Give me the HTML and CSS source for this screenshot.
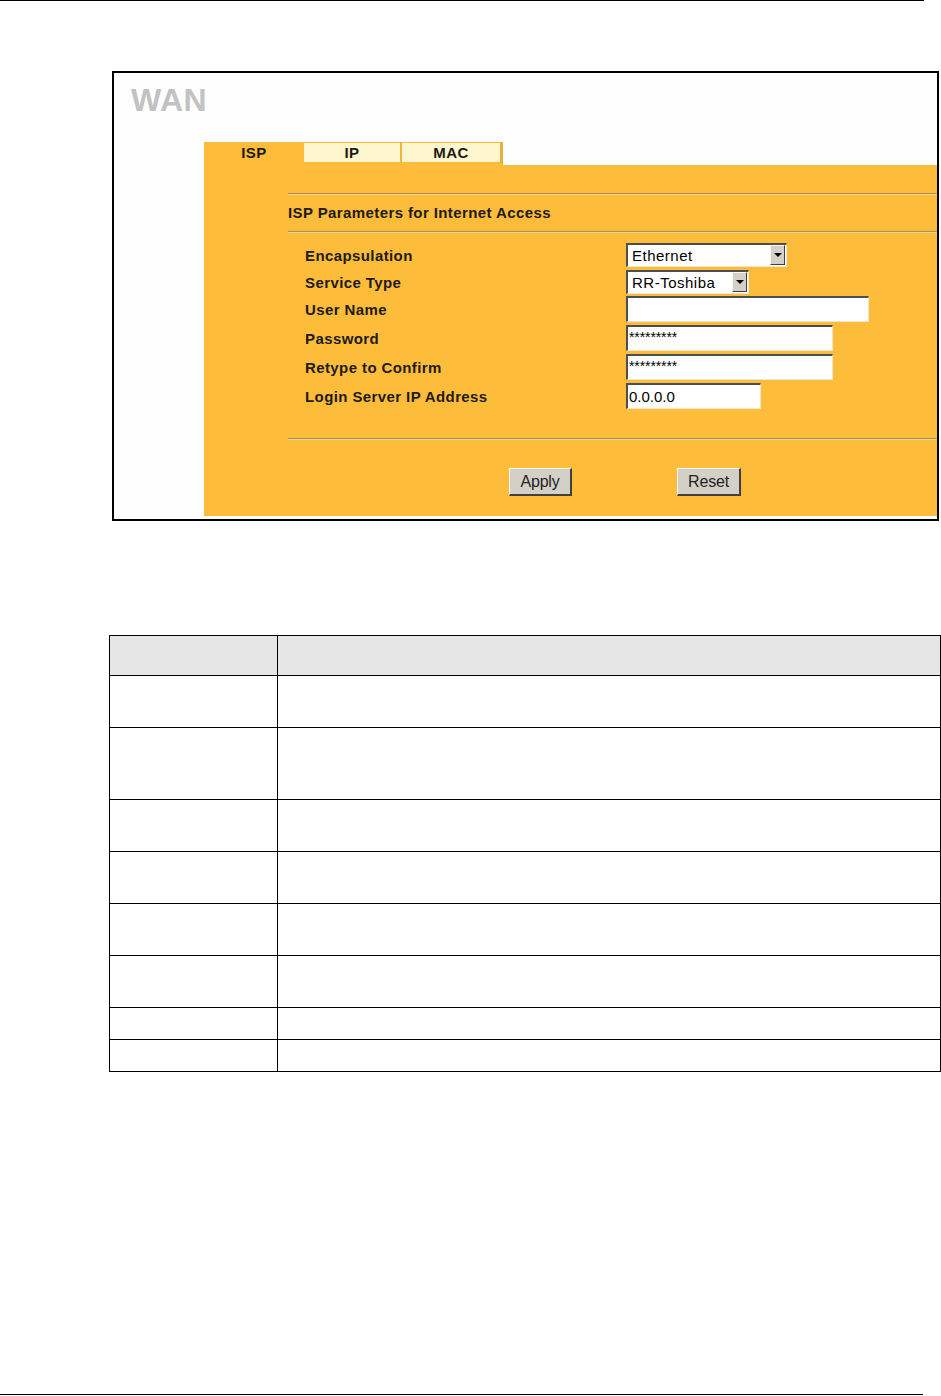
FILE: index.html
```html
<!DOCTYPE html>
<html lang="en">
<head>
    <meta charset="UTF-8">
    <meta name="viewport" content="width=device-width, initial-scale=1.0">
    <title>WAN - ISP</title>
    <link rel="stylesheet" href="styles.css">
</head>
<body>
<div class="page">

    <div class="rule-top"></div>

    <!-- screen capture of the WAN / ISP page -->
    <div class="shot">
        <div class="shot-title">WAN</div>

        <div class="panel">
            <div class="tabs">
                <div class="tab active">ISP</div>
                <div class="tab tab-ip">IP</div>
                <div class="tab tab-mac">MAC</div>
            </div>

            <div class="panel-body">
                <div class="groove"></div>
                <div class="heading">ISP Parameters for Internet Access</div>
                <div class="groove"></div>

                <div class="fields">
                    <div class="field">
                        <div class="label">Encapsulation</div>
                        <div class="select select-wide">
                            <span class="select-value">Ethernet</span>
                            <span class="select-arrow"></span>
                        </div>
                    </div>
                    <div class="field field-tight">
                        <div class="label">Service Type</div>
                        <div class="select select-narrow">
                            <span class="select-value">RR-Toshiba</span>
                            <span class="select-arrow"></span>
                        </div>
                    </div>
                    <div class="field">
                        <div class="label">User Name</div>
                        <div class="input input-user"></div>
                    </div>
                    <div class="field">
                        <div class="label">Password</div>
                        <div class="input input-pass"><span class="stars">*********</span></div>
                    </div>
                    <div class="field">
                        <div class="label">Retype to Confirm</div>
                        <div class="input input-pass"><span class="stars">*********</span></div>
                    </div>
                    <div class="field">
                        <div class="label">Login Server IP Address</div>
                        <div class="input input-ip"><span class="value">0.0.0.0</span></div>
                    </div>
                </div>

                <div class="groove"></div>

                <div class="actions">
                    <button class="btn btn-apply">Apply</button>
                    <button class="btn btn-reset">Reset</button>
                </div>
            </div>
        </div>
    </div>

    <table class="desc">
        <tr class="desc-head"><th></th><th></th></tr>
        <tr class="row-std"><td></td><td></td></tr>
        <tr class="row-tall"><td></td><td></td></tr>
        <tr class="row-std"><td></td><td></td></tr>
        <tr class="row-std"><td></td><td></td></tr>
        <tr class="row-std"><td></td><td></td></tr>
        <tr class="row-std"><td></td><td></td></tr>
        <tr class="row-short"><td></td><td></td></tr>
        <tr class="row-short"><td></td><td></td></tr>
    </table>

    <div class="rule-bottom"></div>
</div>
</body>
</html>
```

FILE: styles.css
```css
* {
    margin: 0;
    padding: 0;
    box-sizing: border-box;
}

body {
    background: #fff;
    font-family: "Liberation Sans", Arial, sans-serif;
    color: #000;
}

.page {
    display: flex;
    flex-direction: column;
    min-height: 1396px;
}

.rule-top {
    width: 924px;
    height: 1px;
    background: #000;
}

.rule-bottom {
    margin-top: auto;
    margin-bottom: 1px;
    width: 923px;
    height: 1px;
    background: #000;
}

/* ---- screenshot frame ---- */

.shot {
    margin: 70px 0 0 112px;
    width: 827px;
    height: 450px;
    border: 2px solid #000;
    background: #fefefe;
    padding-bottom: 3px;
    display: flex;
    flex-direction: column;
}

.shot-title {
    margin: 9px 0 0 17px;
    height: 36px;
    font-size: 32px;
    line-height: 36px;
    font-weight: bold;
    color: #c2c2c2;
    letter-spacing: 0.5px;
}

.panel {
    margin: 24px 0 0 90px;
    flex: 1;
    background: #fdbd3b;
    color: #1e1a14;
    font-size: 15px;
    font-weight: bold;
    letter-spacing: 0.4px;
}

.tabs {
    display: flex;
    height: 23px;
    background: #fefefe;
}

.tab {
    height: 23px;
    line-height: 19px;
    text-align: center;
    background: #fdf6cf;
    border-top: 1px solid #fdbd3b;
    border-bottom: 3px solid #fdbd3b;
}

.tab.active {
    width: 100px;
    background: #fdbd3b;
}

.tab-ip {
    width: 98px;
    border-right: 2px solid #f2b440;
}

.tab-mac {
    width: 101px;
    border-right: 3px solid #e9ad42;
}

.panel-body {
    padding: 28px 0 0 84px;
}

.groove {
    height: 2px;
    border-top: 1px solid #a68c5c;
    border-bottom: 1px solid #f6d58f;
}

.heading {
    height: 36px;
    line-height: 36px;
}

.fields {
    display: flex;
    flex-direction: column;
    gap: 3px;
    padding: 10px 0 29px 17px;
}

.field {
    display: flex;
    align-items: center;
}

.field-tight {
    margin-bottom: -1px;
}

.label {
    width: 321px;
}

/* fake form controls, drawn like the old windows ones */

.select,
.input {
    background: #fff;
    border-top: 2px solid #4e4e4e;
    border-left: 2px solid #4e4e4e;
    border-right: 1px solid #efe6cf;
    border-bottom: 1px solid #efe6cf;
    font-weight: normal;
    color: #000;
}

.select {
    display: flex;
    height: 24px;
    padding: 0 1px 1px 0;
}

.select-wide {
    width: 161px;
}

.select-narrow {
    width: 123px;
}

.select-value {
    flex: 1;
    padding-left: 4px;
    line-height: 21px;
    letter-spacing: 0.5px;
    white-space: nowrap;
}

.select-arrow {
    width: 15px;
    background: #d4d0c8;
    border-top: 1px solid #f4f4f4;
    border-left: 1px solid #f4f4f4;
    border-right: 1px solid #404040;
    border-bottom: 1px solid #404040;
    display: flex;
    justify-content: center;
    align-items: center;
}

.select-arrow::after {
    content: "";
    border-left: 4px solid transparent;
    border-right: 4px solid transparent;
    border-top: 4px solid #000;
}

.input {
    height: 26px;
}

.input-user {
    width: 243px;
}

.input-pass {
    width: 207px;
}

.input-ip {
    width: 135px;
}

.stars {
    display: block;
    padding: 3px 0 0 1px;
    font-size: 14px;
    line-height: 14px;
    letter-spacing: -0.1px;
}

.value {
    display: block;
    padding-left: 1px;
    line-height: 23px;
    letter-spacing: 0;
}

.actions {
    display: flex;
    gap: 105px;
    padding: 28px 0 0 221px;
}

.btn {
    height: 28px;
    background: #d4d0c8;
    border-top: 1px solid #fff;
    border-left: 1px solid #fff;
    border-right: 2px solid #404040;
    border-bottom: 2px solid #404040;
    font-family: "Liberation Sans", Arial, sans-serif;
    font-size: 16px;
    color: #222;
    letter-spacing: -0.2px;
}

.btn-apply {
    width: 63px;
}

.btn-reset {
    width: 64px;
}

/* ---- empty description table ---- */

.desc {
    margin: 114px 0 0 109px;
    width: 832px;
    border-collapse: collapse;
}

.desc th,
.desc td {
    border: 1px solid #000;
    padding: 0;
}

.desc th:first-child,
.desc td:first-child {
    width: 168px;
}

.desc-head th {
    height: 40px;
    background: #e6e6e6;
}

.row-std td {
    height: 52px;
}

.row-tall td {
    height: 72px;
}

.row-short td {
    height: 32px;
}
```
